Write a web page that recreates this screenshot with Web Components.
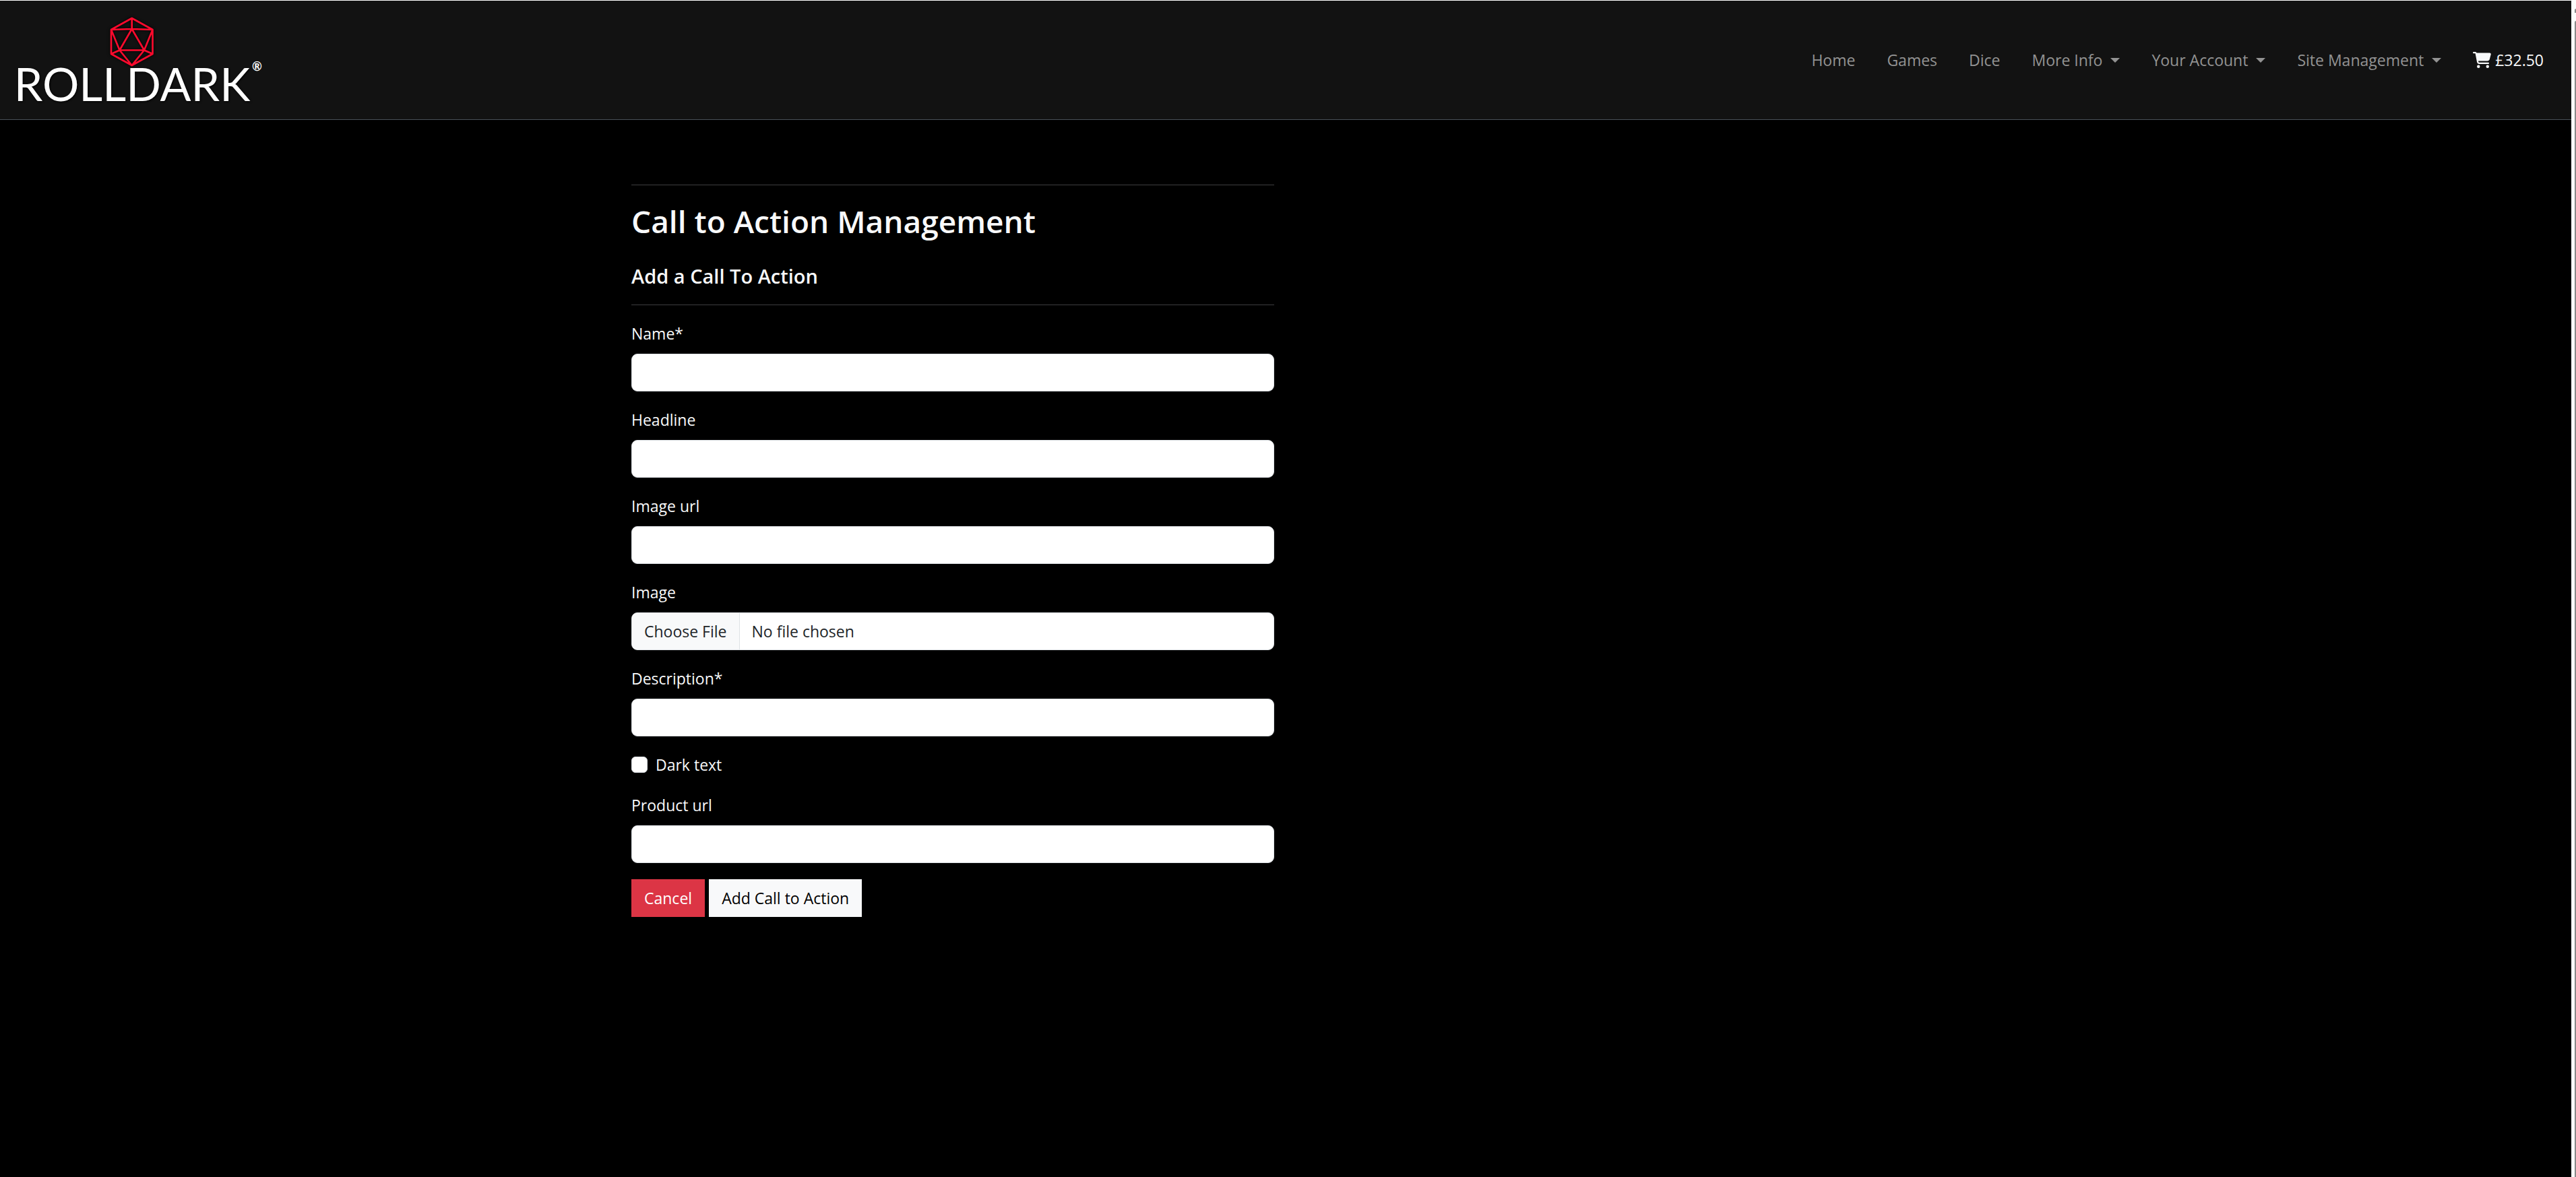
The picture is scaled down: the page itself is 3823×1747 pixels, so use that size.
<!DOCTYPE html>
<html lang="en">
<head>
<meta charset="utf-8">
<title>Rolldark</title>
<style>
html, body { height: 100%; }
body { margin: 0; background: #000; color: #f8f9fa; font: 23px/36px "Open Sans", "Noto Sans", sans-serif; }
</style>
</head>
<body>
<page-shell>
  <site-header slot="header">
    <brand-logo slot="brand"></brand-logo>
    <nav-item>Home</nav-item>
    <nav-item>Games</nav-item>
    <nav-item>Dice</nav-item>
    <nav-item menu>More Info</nav-item>
    <nav-item menu>Your Account</nav-item>
    <nav-item menu>Site Management</nav-item>
    <cart-link>£32.50</cart-link>
  </site-header>
  <cta-form></cta-form>
</page-shell>
<script>
function define(name, html, setup) {
  customElements.define(name, class extends HTMLElement {
    connectedCallback() {
      if (this.shadowRoot) return;
      const t = document.createElement('template');
      t.innerHTML = html;
      this.attachShadow({ mode: 'open' }).append(t.content.cloneNode(true));
      if (setup) setup(this, this.shadowRoot);
    }
  });
}

define('page-shell', `
<style>
:host { display: flex; min-height: 100%; box-sizing: border-box; border-top: 1px solid #fff; }
.page { flex: 1; min-width: 0; }
.track { width: 7px; box-sizing: border-box; background: #fcfcfc; padding: 12px 0 0 5px; display: flex; flex-direction: column; gap: 12px; }
.arrow { height: 6px; background: #8b8b8b; border-top-left-radius: 2px; }
.thumb { flex: 1; background: #8b8b8b; border-top-left-radius: 2px; }
</style>
<div class="page"><slot name="header"></slot><main><slot></slot></main></div>
<div class="track" aria-hidden="true"><div class="arrow"></div><div class="thumb"></div></div>`);

define('site-header', `
<style>
:host { display: block; }
header { display: flex; align-items: center; justify-content: space-between; height: 176px; background: #121212; border-bottom: 1px solid #495057; padding: 0 41px 0 18px; }
nav { display: flex; align-items: center; gap: 47px; }
</style>
<header><slot name="brand"></slot><nav aria-label="Main"><slot></slot></nav></header>`);

define('brand-logo', `
<style>
:host { display: block; }
a { display: grid; grid-template-columns: 356px auto; justify-content: start; padding-bottom: 5px; color: #fff; text-decoration: none; font-family: Lato, sans-serif; }
svg { width: 72px; height: 80px; margin-bottom: -5px; justify-self: center; filter: drop-shadow(0 0 2px #000); }
.name { grid-row: 2; justify-self: center; font-size: 68px; line-height: 54px; text-shadow: 1px 1px 3px #000; }
.mark { grid-row: 2; grid-column: 2; font-size: 18px; line-height: 20px; font-weight: 700; margin-top: -9px; }
</style>
<a href="#" aria-label="Rolldark home">
<svg viewBox="160 22 72 80" fill="none" stroke="#ff0a2d" stroke-width="2.6" stroke-linejoin="round"><path d="M195.7 27L226.5 44V80L195.7 97 165 80V44ZM195.7 27V43M165 44L195.7 43 226.5 44M195.7 43L177.5 74.5H214ZM165 44L177.5 74.5 165 80M226.5 44L214 74.5 226.5 80M177.5 74.5L195.7 97 214 74.5M195.7 43L214 74.5"/></svg>
<span class="name">ROLLDARK</span><span class="mark">®</span></a>`);

define('nav-item', `
<style>
:host { display: block; }
a, button { display: flex; align-items: center; gap: 12px; font: inherit; color: #939393; background: none; border: 0; padding: 0; text-decoration: none; white-space: nowrap; }
i { width: 0; border: 7px solid transparent; border-top-color: #939393; border-bottom: 0; }
</style>
<a href="#"><slot></slot></a>`, (el, root) => {
  if (!el.hasAttribute('menu')) return;
  const b = document.createElement('button');
  b.type = 'button';
  b.setAttribute('aria-haspopup', 'true');
  b.append(document.createElement('slot'), document.createElement('i'));
  root.querySelector('a').replaceWith(b);
});

define('cart-link', `
<style>
:host { display: block; }
a { display: flex; align-items: center; gap: 6px; color: #f8f9fa; text-decoration: none; }
svg { width: 27px; height: 24px; fill: #f8f9fa; }
</style>
<a href="#"><svg viewBox="0 0 576 512" aria-hidden="true"><path d="M0 24C0 10.7 10.7 0 24 0H69.5c22 0 41.5 12.8 50.6 32h411c26.3 0 45.5 25 38.6 50.4l-41 152.3c-8.5 31.4-37 53.3-69.5 53.3H170.7l5.4 28.5c2.2 11.3 12.1 19.5 23.6 19.5H488c13.3 0 24 10.7 24 24s-10.7 24-24 24H199.7c-34.6 0-64.3-24.6-70.7-58.5L77.4 54.5c-.7-3.8-4-6.5-7.9-6.5H24C10.7 48 0 37.3 0 24zM128 464a48 48 0 1 1 96 0 48 48 0 1 1 -96 0zm336-48a48 48 0 1 1 0 96 48 48 0 1 1 0-96z"/></svg><slot></slot></a>`);

define('form-field', `
<style>
:host { display: flex; flex-direction: column; gap: 12px; }
input { box-sizing: border-box; display: block; width: 100%; height: 56px; margin: 0; font: inherit; color: #212529; background: #fff; border: 1px solid #dee2e6; border-radius: 9px; padding: 9px 18px; }
input[type=file] { overflow: hidden; }
input::file-selector-button { font: inherit; color: #212529; background: #f8f9fa; border: 0 solid #dee2e6; border-right-width: 1px; padding: 9px 18px; margin: -9px 18px -9px -18px; }
</style>
<label for="control"></label><input id="control">`, (el, root) => {
  root.querySelector('label').textContent = el.getAttribute('label');
  root.querySelector('input').type = el.getAttribute('type') || 'text';
});

define('check-field', `
<style>
:host { display: flex; gap: 12px; }
input { appearance: none; width: 24px; height: 24px; margin: 6px 0; background: #fff; border: 1px solid #dee2e6; border-radius: 6px; }
</style>
<input type="checkbox" id="control"><label for="control"><slot></slot></label>`);

define('action-button', `
<style>
:host { display: block; }
button { height: 56px; font: inherit; border: 0; padding: 0 19px; background: #f8f9fa; color: #000; }
:host([danger]) button { background: #dc3545; color: #fff; }
</style>
<button type="button"><slot></slot></button>`);

define('cta-form', `
<style>
:host { display: block; box-sizing: border-box; width: 25%; margin: 96px 0 0 calc(25% - 17px); }
hr { height: 1px; border: 0; margin: 0; background: #3e3e3f; }
h2 { font-size: 46px; line-height: 58px; font-weight: 600; margin: 24px 0 35px; }
h3 { font-size: 29px; line-height: 36px; font-weight: 600; margin: 0 0 24px; }
form { display: flex; flex-direction: column; gap: 24px; margin-top: 24px; }
.actions { display: flex; gap: 6px; }
</style>
<hr><h2>Call to Action Management</h2><h3>Add a Call To Action</h3><hr>
<form>
<form-field label="Name*"></form-field>
<form-field label="Headline"></form-field>
<form-field label="Image url"></form-field>
<form-field label="Image" type="file"></form-field>
<form-field label="Description*"></form-field>
<check-field>Dark text</check-field>
<form-field label="Product url"></form-field>
<div class="actions"><action-button danger>Cancel</action-button><action-button>Add Call to Action</action-button></div>
</form>`);
</script>
</body>
</html>
